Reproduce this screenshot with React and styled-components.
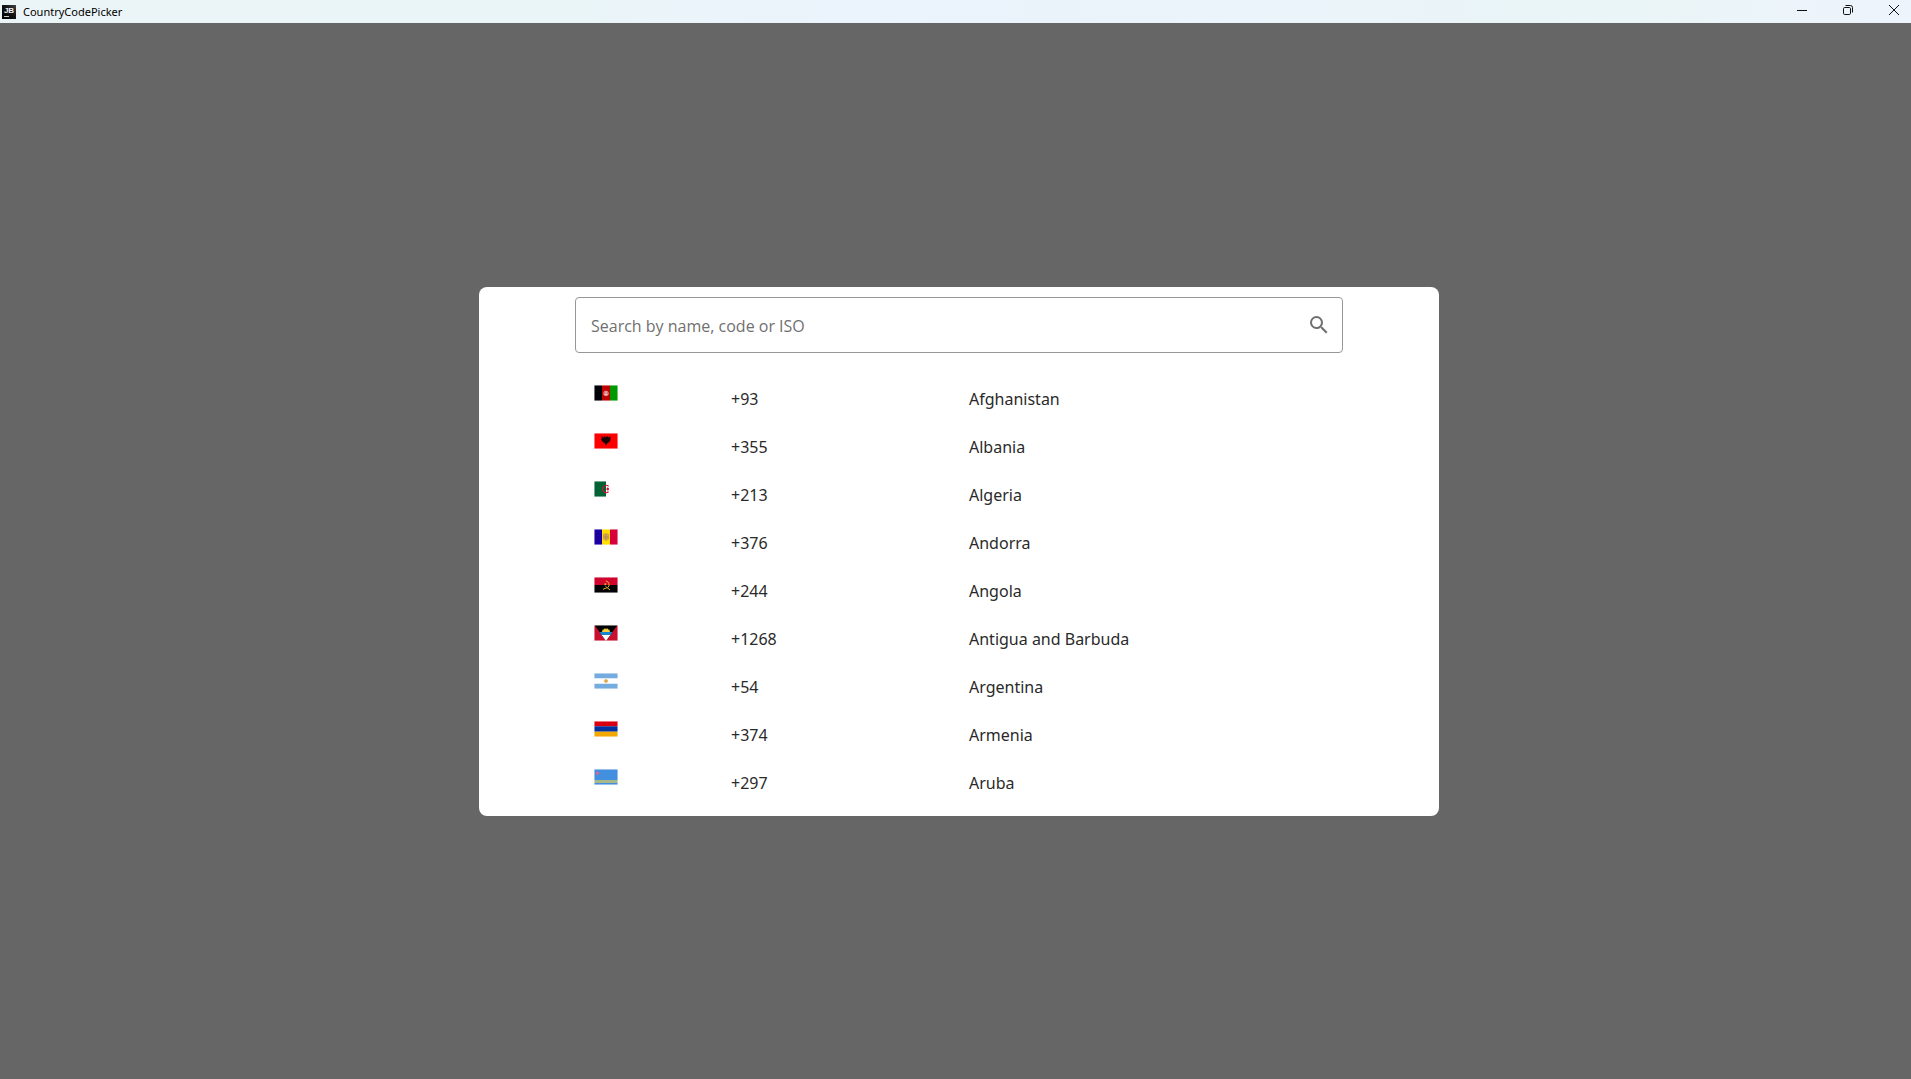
import React, { useState } from "react";
import styled, { createGlobalStyle } from "styled-components";

const GlobalStyle = createGlobalStyle`
  *, *::before, *::after { box-sizing: border-box; }
  body { margin: 0; font-family: "Noto Sans", "Open Sans", sans-serif; }
`;

const Window = styled.div`
  display: flex;
  flex-direction: column;
  min-height: 100vh;
  background: #666666;
`;

const TitleBar = styled.header`
  display: flex;
  align-items: center;
  height: 23px;
  padding-left: 2px;
  background: linear-gradient(90deg, #ebf5f7 0%, #eaf5f8 30%, #ebf3fc 45%, #eaf4fa 65%, #eaf5f7 85%, #edf4fc 100%);
`;

const Title = styled.h1`
  flex: 1;
  margin: 0 0 0 7px;
  font: 400 11px/22px "Noto Sans", "Open Sans", sans-serif;
  color: #000;
`;

const WindowControls = styled.div`
  display: flex;
  align-self: flex-start;
  gap: 12px;
`;

const ControlButton = styled.button`
  display: flex;
  align-items: center;
  justify-content: center;
  width: 34px;
  height: 20px;
  padding: 0;
  border: 0;
  background: transparent;
  color: #111;
`;

const Scrim = styled.main`
  flex: 1;
  display: flex;
  align-items: center;
  justify-content: center;
  padding-left: 7px;
`;

const Dialog = styled.section`
  width: 960px;
  max-width: 100%;
  padding: 10px 96px;
  border-radius: 8px;
  background: #fff;
`;

const SearchField = styled.label`
  display: flex;
  align-items: center;
  height: 56px;
  padding: 0 11px 0 15px;
  border: 1px solid #979797;
  border-radius: 4px;
  color: #6f6f6f;
`;

const SearchInput = styled.input`
  flex: 1;
  min-width: 0;
  padding: 2px 0 0;
  border: 0;
  outline: 0;
  background: transparent;
  font: 400 16px/24px "Open Sans", "Noto Sans", sans-serif;
  color: #1f1f1f;
  &::placeholder { color: #707070; opacity: 1; }
`;

const CountryList = styled.ul`
  margin: 21px 0 0;
  padding: 0;
  list-style: none;
`;

const CountryRow = styled.button`
  display: grid;
  grid-template-columns: 137fr 238fr 355fr;
  align-items: start;
  width: 100%;
  height: 48px;
  padding: 11px 19px 9px;
  border: 0;
  background: transparent;
  text-align: left;
  font: 400 16px/28px "Noto Sans", "Open Sans", sans-serif;
  color: #2a2a2a;
`;

const FlagImage = styled.svg`
  display: block;
  width: 24px;
  height: 16px;
`;

const flags = {
  af: <>
    <path fill="#000008" d="M0 0h8v16H0z" /><path fill="#bf0000" d="M8 0h8v16H8z" /><path fill="#009a00" d="M16 0h8v16h-8z" />
    <circle cx="12" cy="8.4" r="2.4" fill="#d86a6a" stroke="#e69a9a" strokeWidth=".7" /><path stroke="#fff" strokeWidth=".7" d="M10.5 9.6h3M12 6.6v2" />
  </>,
  al: <>
    <path fill="#f00" d="M0 0h24v16H0z" />
    <path fill="#1c0000" d="M7.500 3l2 1.500L10.800 3l1.200 1.500L13.200 3l1.300 1.500 2-1.500-.2 2.200.5 1.300-.8 1 .4 1-1.700.2-.4 1.600-1-.2L12 13l-1.300-2.900-1 .2-.4-1.600-1.700-.2.4-1-.8-1 .5-1.300z" />
  </>,
  dz: <>
    <path fill="#fff" d="M0 0h24v16H0z" /><path fill="#006233" d="M0 0h12v16H0z" />
    <path fill="none" stroke="#d21034" strokeWidth="1.100" d="M14.600 5.200a3.600 3.600 0 1 0 0 5.600" /><path fill="#d21034" d="M11.600 8l1.300-.5.1-1.400.9 1 1.500-.4L14.600 8l.8 1.300-1.500-.4-.9 1-.1-1.400z" />
  </>,
  ad: <>
    <path fill="#1c00a0" d="M0 0h8v16H0z" /><path fill="#fedf00" d="M8 0h8v16H8z" /><path fill="#d8003a" d="M16 0h8v16h-8z" />
    <path fill="#d2ad50" stroke="#c08a50" strokeWidth=".6" d="M9.400 5.400L12 4.500l2.600.9v4.600L12 11.600l-2.600-1.600z" /><path stroke="#b36c48" strokeWidth=".6" d="M10 8h4M12 5.500v5" />
  </>,
  ao: <>
    <path fill="#d0042c" d="M0 0h24v8H0z" /><path fill="#000" d="M0 8h24v8H0z" />
    <path fill="none" stroke="#e5b52c" strokeWidth="1" d="M11.800 4a3.700 3.700 0 0 1 1.800 6.700M9 12.400l2-1 1.500-.2M11.500 9.500l4.500 3.300" /><path fill="#e5c52c" d="M11.400 5.800l.4 1h1.100l-.9.700.4 1.100-1-.6-1 .6.400-1.100-.9-.7H11z" />
  </>,
  ag: <>
    <path fill="#c8102e" d="M0 0h24v16H0z" /><path fill="#000" d="M.5 0h23L12 16z" />
    <path fill="#1687ca" d="M5.500 7h13l-2.600 4H8.100z" /><path fill="#fff" d="M7.700 10h8.600L12 16z" />
    <path fill="#f5d13a" d="M7.500 7l1.100-1-.5-1.300 1.600.1.300-1.500 1.200.9.800-1.300.8 1.300 1.200-.9.300 1.500 1.600-.1-.5 1.300 1.100 1z" />
  </>,
  ar: <>
    <path fill="#fff" d="M0 0h24v16H0z" /><path fill="#74acdf" d="M0 0h24v5.300H0zM0 10.700h24V16H0z" />
    <circle cx="12" cy="8" r="1.800" fill="#d69a32" /><path stroke="#e7b85e" strokeWidth=".6" d="M9.800 8h4.400M12 5.800v4.400" />
  </>,
  am: <><path fill="#d90012" d="M0 0h24v5.400H0z" /><path fill="#0033a0" d="M0 5.300h24v5.400H0z" /><path fill="#f2a800" d="M0 10.700h24V16H0z" /></>,
  aw: <>
    <path fill="#418fde" d="M0 0h24v16H0z" /><path fill="#a7b88a" d="M0 11h24v3H0z" />
    <path fill="#e8677f" d="M3.600 1.500l.7 2 2 .7-2 .7-.7 2-.7-2-2-.7 2-.7z" />
  </>,
};

const countries = [
  ["af", "+93", "Afghanistan"],
  ["al", "+355", "Albania"],
  ["dz", "+213", "Algeria"],
  ["ad", "+376", "Andorra"],
  ["ao", "+244", "Angola"],
  ["ag", "+1268", "Antigua and Barbuda"],
  ["ar", "+54", "Argentina"],
  ["am", "+374", "Armenia"],
  ["aw", "+297", "Aruba"],
];

function Flag({ iso }) {
  return (
    <FlagImage viewBox="0 0 24 16" aria-hidden="true">
      {flags[iso]}
      <rect x=".25" y=".25" width="23.500" height="15.500" fill="none" stroke="#fff" strokeOpacity=".9" strokeWidth=".5" />
    </FlagImage>
  );
}

const LogoText = styled.text`
  font: 700 8px "Liberation Sans", sans-serif;
  fill: #f2f2f2;
`;

function AppLogo() {
  return (
    <svg width="14" height="14" viewBox="0 0 14 14" aria-hidden="true">
      <defs>
        <linearGradient id="logo" x1="0" y1="1" x2="1" y2="0">
          <stop offset="0" stopColor="#000" /><stop offset=".6" stopColor="#161616" /><stop offset="1" stopColor="#444" />
        </linearGradient>
      </defs>
      <path fill="url(#logo)" d="M0 0h14v14H0z" />
      <LogoText x="7" y="8" textAnchor="middle">JB</LogoText>
      <path fill="#ccc" d="M2 11h5v1H2z" />
    </svg>
  );
}

export default function App() {
  const [query, setQuery] = useState("");
  const term = query.trim().toLowerCase();
  const visible = countries.filter((c) => c.some((v) => v.toLowerCase().includes(term)));

  return (
    <Window>
      <GlobalStyle />
      <TitleBar>
        <AppLogo />
        <Title>CountryCodePicker</Title>
        <WindowControls>
          <ControlButton aria-label="Minimize">
            <svg width="10" height="10" viewBox="0 0 10 10"><path fill="currentColor" d="M0 5h10v1H0z" /></svg>
          </ControlButton>
          <ControlButton aria-label="Restore">
            <svg width="10" height="10" viewBox="0 0 10 10" fill="none" stroke="currentColor">
              <rect x=".5" y="2.500" width="7" height="7" rx="1.200" /><path d="M2.500.5h5a2 2 0 0 1 2 2v5" />
            </svg>
          </ControlButton>
          <ControlButton aria-label="Close">
            <svg width="10" height="10" viewBox="0 0 10 10" stroke="currentColor"><path d="M0 0l10 10M10 0L0 10" /></svg>
          </ControlButton>
        </WindowControls>
      </TitleBar>
      <Scrim>
        <Dialog role="dialog" aria-label="Country codes">
          <SearchField>
            <SearchInput
              type="text"
              aria-label="Search by name, code or ISO"
              placeholder="Search by name, code or ISO"
              value={query}
              onChange={(e) => setQuery(e.target.value)}
            />
            <svg width="24" height="24" viewBox="0 0 24 24" aria-hidden="true">
              <path fill="currentColor" d="M15.500 14h-.79l-.28-.27A6.470 6.470 0 0 0 16 9.500 6.500 6.500 0 1 0 9.500 16c1.610 0 3.090-.59 4.230-1.570l.27.28v.79l5 4.990L20.490 19l-4.990-5zm-6 0C7.010 14 5 11.990 5 9.500S7.010 5 9.500 5 14 7.010 14 9.500 11.990 14 9.500 14z" />
            </svg>
          </SearchField>
          <CountryList>
            {visible.map(([iso, code, name]) => (
              <li key={iso}>
                <CountryRow type="button">
                  <Flag iso={iso} />
                  <span>{code}</span>
                  <span>{name}</span>
                </CountryRow>
              </li>
            ))}
          </CountryList>
        </Dialog>
      </Scrim>
    </Window>
  );
}
